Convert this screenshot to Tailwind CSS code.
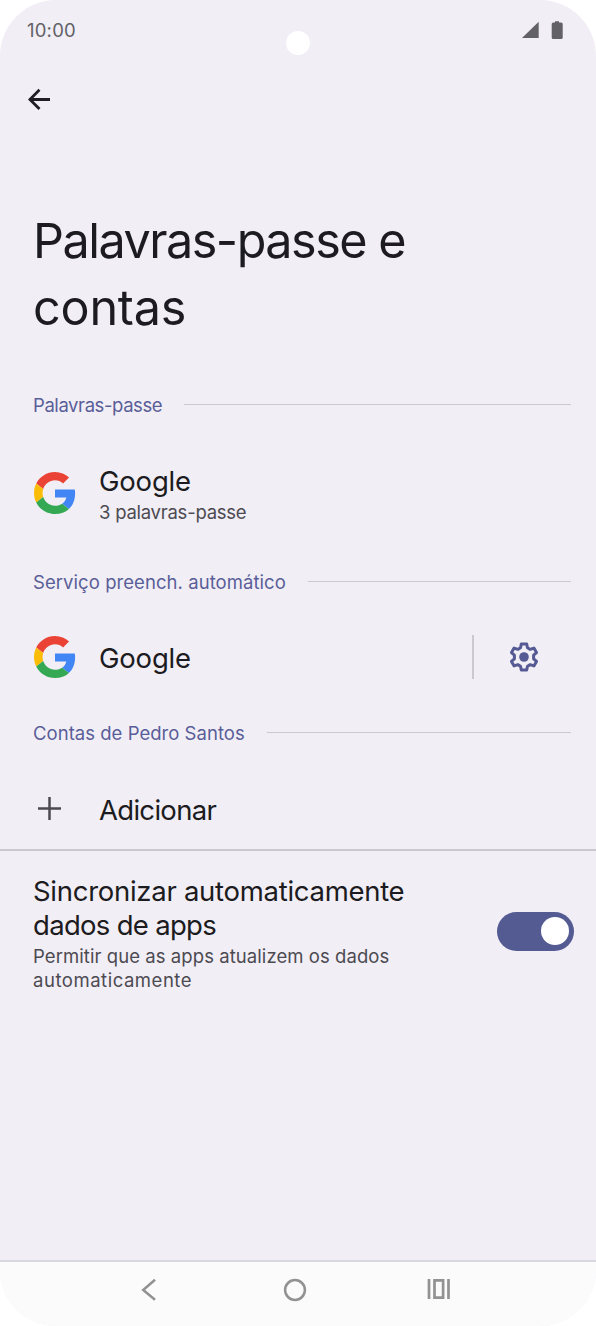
<!DOCTYPE html>
<html lang="pt">
<head>
<meta charset="utf-8">
<title>Palavras-passe e contas</title>
<script src="https://cdn.jsdelivr.net/npm/@tailwindcss/browser@4"></script>
</head>
<body class="bg-white font-['Inter','Liberation_Sans',sans-serif] text-[#1c1b20]">
<svg class="hidden">
  <symbol id="google" viewBox="0 0 48 48">
    <path fill="#EA4335" d="M24 9.5c3.54 0 6.71 1.22 9.21 3.6l6.85-6.85C35.9 2.38 30.47 0 24 0 14.62 0 6.51 5.38 2.56 13.22l7.98 6.19C12.43 13.72 17.74 9.5 24 9.5z"/>
    <path fill="#4285F4" d="M46.98 24.55c0-1.57-.15-3.09-.38-4.55H24v9.02h12.94c-.58 2.96-2.26 5.48-4.78 7.18l7.73 6c4.51-4.18 7.09-10.36 7.09-17.65z"/>
    <path fill="#FBBC05" d="M10.53 28.59c-.48-1.45-.76-2.99-.76-4.59s.27-3.14.76-4.59l-7.98-6.19C.92 16.46 0 20.12 0 24c0 3.88.92 7.54 2.56 10.78l7.97-6.19z"/>
    <path fill="#34A853" d="M24 48c6.48 0 11.93-2.13 15.89-5.81l-7.73-6c-2.15 1.45-4.92 2.3-8.16 2.3-6.26 0-11.57-4.22-13.47-9.91l-7.98 6.19C6.51 42.62 14.62 48 24 48z"/>
  </symbol>
</svg>
<div class="relative flex h-[1326px] w-[596px] flex-col overflow-hidden rounded-[56px] bg-[#f1eef6]">
  <div class="absolute left-[286px] top-[31px] size-6 rounded-full bg-white"></div>
  <header class="flex h-[60px] shrink-0 items-center justify-between pl-[27px] pr-8 text-[#626166]">
    <span class="text-[18.5px] leading-6 tracking-[0.2px]">10:00</span>
    <svg class="h-[18px] w-[42px]" viewBox="0 0 42 18" fill="currentColor"><path d="M0 17 16.7.7V17z"/><path d="M33 .2h4v1.3h2.2q1.5 0 1.5 1.5v13.4q0 1.500-1.500 1.500h-8q-1.500 0-1.500-1.500V3q0-1.500 1.500-1.500H33z"/></svg>
  </header>
  <div class="flex h-20 shrink-0 items-center pl-7">
    <svg class="h-6 w-[23px]" viewBox="0 0 23 24" fill="none" stroke="#1f1e22" stroke-width="2.8"><path d="M1.900 11.500H22M11.500 1.800 1.900 11.500l9.600 9.600"/></svg>
  </div>
  <h1 class="mt-[67px] pl-[33px] text-[48.5px] leading-[67px]"><span class="block tracking-[-1.5px]">Palavras-passe e</span><span class="block tracking-[-0.2px]">contas</span></h1>

  <div class="mt-[51px] flex h-6 shrink-0 items-center gap-[22px] pl-[33px] pr-[25px] text-[#5a5e98]">
    <h2 class="mt-px text-[18.5px] leading-6 tracking-[-0.42px]">Palavras-passe</h2><div class="h-px flex-1 bg-[#cbc9d0]"></div>
  </div>
  <div class="mt-12 flex shrink-0 items-center pl-[34px]">
    <svg class="mb-[3px] h-[42px] w-[42px]"><use href="#google"/></svg>
    <div class="ml-[23px]">
      <p class="text-[27.5px] leading-[34px] tracking-[-0.2px]">Google</p>
      <p class="mt-0.5 text-[18.5px] leading-6 tracking-[-0.25px] text-[#4c4a51]">3 palavras-passe</p>
    </div>
  </div>
  <div class="mt-[45px] flex h-6 shrink-0 items-center gap-[22px] pl-[33px] pr-[25px] text-[#5a5e98]">
    <h2 class="mt-px text-[18.5px] leading-6 tracking-[0.06px]">Serviço preench. automático</h2><div class="h-px flex-1 bg-[#cbc9d0]"></div>
  </div>
  <div class="mt-[42px] flex h-11 shrink-0 items-center pl-[34px] pr-[57px]">
    <svg class="h-[42px] w-[42px]"><use href="#google"/></svg>
    <p class="ml-[23px] mt-[2px] flex-1 text-[27.5px] leading-[34px] tracking-[-0.2px]">Google</p>
    <div class="mr-[35px] h-11 w-[2px] bg-[#cbc9d0]"></div>
    <svg class="h-[30px] w-[30px]" viewBox="2 2 20 20" fill="none" stroke="#555a94" stroke-width="2" stroke-linejoin="round"><path d="M10.200 3.300h3.600l.5 2.550 1.800 1.050 2.500-.85 1.750 3-1.950 1.750v2.400l1.950 1.750-1.750 3-2.500-.85-1.800 1.050-.5 2.550h-3.600l-.5-2.550-1.800-1.050-2.500.85-1.750-3 1.950-1.750v-2.400L3.650 9.050l1.750-3 2.500.85 1.800-1.050z"/><circle cx="12" cy="12" r="3.200" fill="#555a94" stroke="none"/></svg>
  </div>
  <div class="mt-[41px] flex h-6 shrink-0 items-center gap-[22px] pl-[33px] pr-[25px] text-[#5a5e98]">
    <h2 class="mt-[2px] text-[18.5px] leading-6 tracking-[0.03px]">Contas de Pedro Santos</h2><div class="h-px flex-1 bg-[#cbc9d0]"></div>
  </div>
  <div class="mt-[48px] flex h-[34px] shrink-0 items-center pl-[38px]">
    <svg class="-mt-px h-[23px] w-[23px]" viewBox="0 0 23 23" stroke="#4c4a51" stroke-width="2.5"><path d="M11.500 0v23M0 11.500h23"/></svg>
    <p class="ml-[38px] mt-px text-[27.5px] leading-[34px] tracking-[-0.7px]">Adicionar</p>
  </div>
  <div class="mt-[23px] h-0.5 shrink-0 bg-[#cbc9d0]"></div>
  <div class="mt-[23px] flex shrink-0 items-center justify-between pl-[33px] pr-[22px]">
    <div>
      <p class="text-[27.5px] leading-[34px]"><span class="block tracking-[-0.28px]">Sincronizar automaticamente</span><span class="block tracking-[-0.7px]">dados de apps</span></p>
      <p class="mt-0.5 text-[18.5px] leading-6 text-[#4c4a51]"><span class="block tracking-[0.07px]">Permitir que as apps atualizem os dados</span><span class="block tracking-[0.53px]">automaticamente</span></p>
    </div>
    <div class="mb-1 flex h-[39px] w-[77px] items-center justify-end rounded-full bg-[#545a92] pr-[5px]"><div class="size-7 rounded-full bg-white"></div></div>
  </div>
  <nav class="mt-auto flex h-[66px] shrink-0 items-start border-t-2 border-[#dad8df] bg-[#fbfbfb] pl-[141px] pt-[16px] text-[#929292]">
    <svg class="h-6 w-[15px]" viewBox="0 0 15 24" fill="none" stroke="currentColor" stroke-width="2.5"><path d="M14 1.800 2.200 12 14 21.700"/></svg>
    <svg class="ml-[127px] h-6 w-6" viewBox="0 0 24 24" fill="none" stroke="currentColor" stroke-width="2.5"><circle cx="12" cy="12" r="9.900"/></svg>
    <svg class="ml-[120px] h-[22px] w-6" viewBox="0 0 24 22" fill="none" stroke="currentColor" stroke-width="2.700"><path d="M2 1v20M21.500 1v20M7.500 2.400h8.600v17.200H7.500z"/></svg>
  </nav>
</div>
</body>
</html>
